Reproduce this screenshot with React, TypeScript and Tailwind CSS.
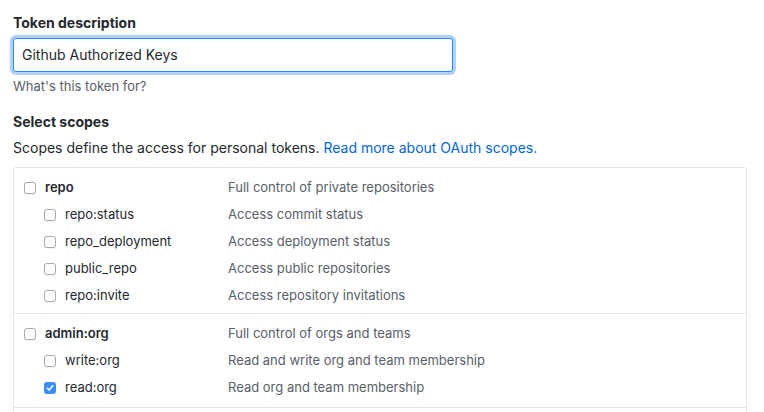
import React from "react";

type Scope = { name: string; desc: string; checked?: boolean; sub?: boolean };

const groups: Scope[][] = [
  [
    { name: "repo", desc: "Full control of private repositories" },
    { name: "repo:status", desc: "Access commit status", sub: true },
    { name: "repo_deployment", desc: "Access deployment status", sub: true },
    { name: "public_repo", desc: "Access public repositories", sub: true },
    { name: "repo:invite", desc: "Access repository invitations", sub: true },
  ],
  [
    { name: "admin:org", desc: "Full control of orgs and teams" },
    { name: "write:org", desc: "Read and write org and team membership", sub: true },
    { name: "read:org", desc: "Read org and team membership", sub: true, checked: true },
  ],
];

function Box({ checked }: { checked?: boolean }) {
  if (checked) {
    return (
      <span className="flex h-[12px] w-[12px] shrink-0 items-center justify-center rounded-[3px] bg-[#3a8ef6]">
        <svg width="8" height="8" viewBox="0 0 8 8" fill="none">
          <path d="M1.3 4.2 L3.2 6 L6.7 1.8" stroke="white" strokeWidth="1.5" strokeLinecap="round" strokeLinejoin="round" />
        </svg>
      </span>
    );
  }
  return (
    <span className="block h-[12px] w-[12px] shrink-0 rounded-[3px] border border-[#a9a9a9] bg-white shadow-[0_0.5px_0.5px_rgba(0,0,0,0.08)]" />
  );
}

export default function App() {
  return (
    <div
      className="min-h-[412px] w-[764px] bg-white pl-[13px] pr-[17px] pt-[12px] text-[14px] text-[#24292e]"
      style={{ fontFamily: 'Inter, "Liberation Sans", Arial, sans-serif' }}
    >
      <div className="text-[14px] font-bold leading-[21px]">Token description</div>
      <div className="mt-[5px] h-[34px] w-[440px] rounded-[3px] border border-[#2188ff] bg-white pl-[8px] leading-[32px] shadow-[0_0_0_3px_rgba(3,102,214,0.3)]">
        Github Authorized Keys
      </div>
      <div className="mt-[5px] text-[13px] leading-[18px] text-[#586069]">What's this token for?</div>

      <div className="mt-[16px] text-[14px] font-bold leading-[21px]">Select scopes</div>
      <div className="mt-[5px] leading-[21px]">
        Scopes define the access for personal tokens.{" "}
        <span className="text-[#0366d6]">Read more about OAuth scopes.</span>
      </div>

      <div className="mt-[9px] rounded-[3px] border border-[#e1e4e8]">
        {groups.map((g, gi) => (
          <div
            key={gi}
            className={gi === 0 ? "pb-[4px] pt-[6px]" : "border-t border-[#e1e4e8] pb-[6px] pt-[6px]"}
          >
            {g.map((s) => (
              <div key={s.name} className="flex h-[27px] items-center text-[13px]">
                <div className={"flex w-[214px] items-center gap-[9px] " + (s.sub ? "pl-[30px]" : "pl-[10px]")}>
                  <Box checked={s.checked} />
                  <span className={s.sub ? "" : "font-semibold"}>{s.name}</span>
                </div>
                <div className="text-[#586069]">{s.desc}</div>
              </div>
            ))}
          </div>
        ))}
        <div className="h-[20px] border-t border-[#e1e4e8]" />
      </div>
    </div>
  );
}
